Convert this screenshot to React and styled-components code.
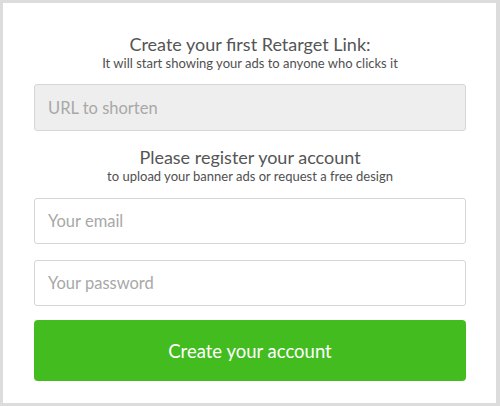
import React from 'react';
import styled, { createGlobalStyle } from 'styled-components';

const Global = createGlobalStyle`
  html, body {
    margin: 0;
    padding: 0;
    background: #fff;
  }
  body {
    font-family: Lato, "Open Sans", sans-serif;
  }
`;

const Frame = styled.div`
  box-sizing: border-box;
  width: 500px;
  height: 406px;
  border: 3px solid #dcdcdc;
  border-right-width: 4px;
  background: #fff;
  padding: 30px 30px 0 31px;
  display: flex;
  flex-direction: column;
`;

const Heading = styled.div`
  text-align: center;
  color: #555;
`;

const Title = styled.div`
  font-size: 18px;
  line-height: 22px;
`;

const Sub = styled.div`
  font-size: 13px;
  line-height: 17px;
  color: #505050;
`;

const Field = styled.input`
  box-sizing: border-box;
  display: block;
  width: 100%;
  height: ${(p) => p.$h || 47}px;
  margin-top: ${(p) => p.$top || 0}px;
  padding: 0 13px;
  border: 1px solid #d6d6d6;
  border-radius: 3px;
  background: ${(p) => (p.$muted ? '#eeeeee' : '#fff')};
  font-family: Lato, "Open Sans", sans-serif;
  font-size: 16.5px;
  color: #555;
  outline: none;
  &::placeholder {
    color: #a8a8a8;
  }
`;

const Submit = styled.button`
  box-sizing: border-box;
  width: 100%;
  height: 61px;
  margin-top: 14px;
  border: none;
  border-radius: 4px;
  background: #43bc1f;
  color: #fff;
  font-family: Lato, "Open Sans", sans-serif;
  font-size: 18.5px;
  cursor: pointer;
`;

const Spacer = styled.div`
  height: ${(p) => p.$h}px;
`;

export default function App() {
  return (
    <>
      <Global />
      <Frame>
        <Heading>
          <Title>Create your first Retarget Link:</Title>
          <Sub>It will start showing your ads to anyone who clicks it</Sub>
        </Heading>
        <Field $muted $top={12} placeholder="URL to shorten" />
        <Spacer $h={15} />
        <Heading>
          <Title>Please register your account</Title>
          <Sub>to upload your banner ads or request a free design</Sub>
        </Heading>
        <Field $top={13} $h={46} placeholder="Your email" />
        <Field $top={16} $h={46} placeholder="Your password" type="password" />
        <Submit>Create your account</Submit>
      </Frame>
    </>
  );
}
